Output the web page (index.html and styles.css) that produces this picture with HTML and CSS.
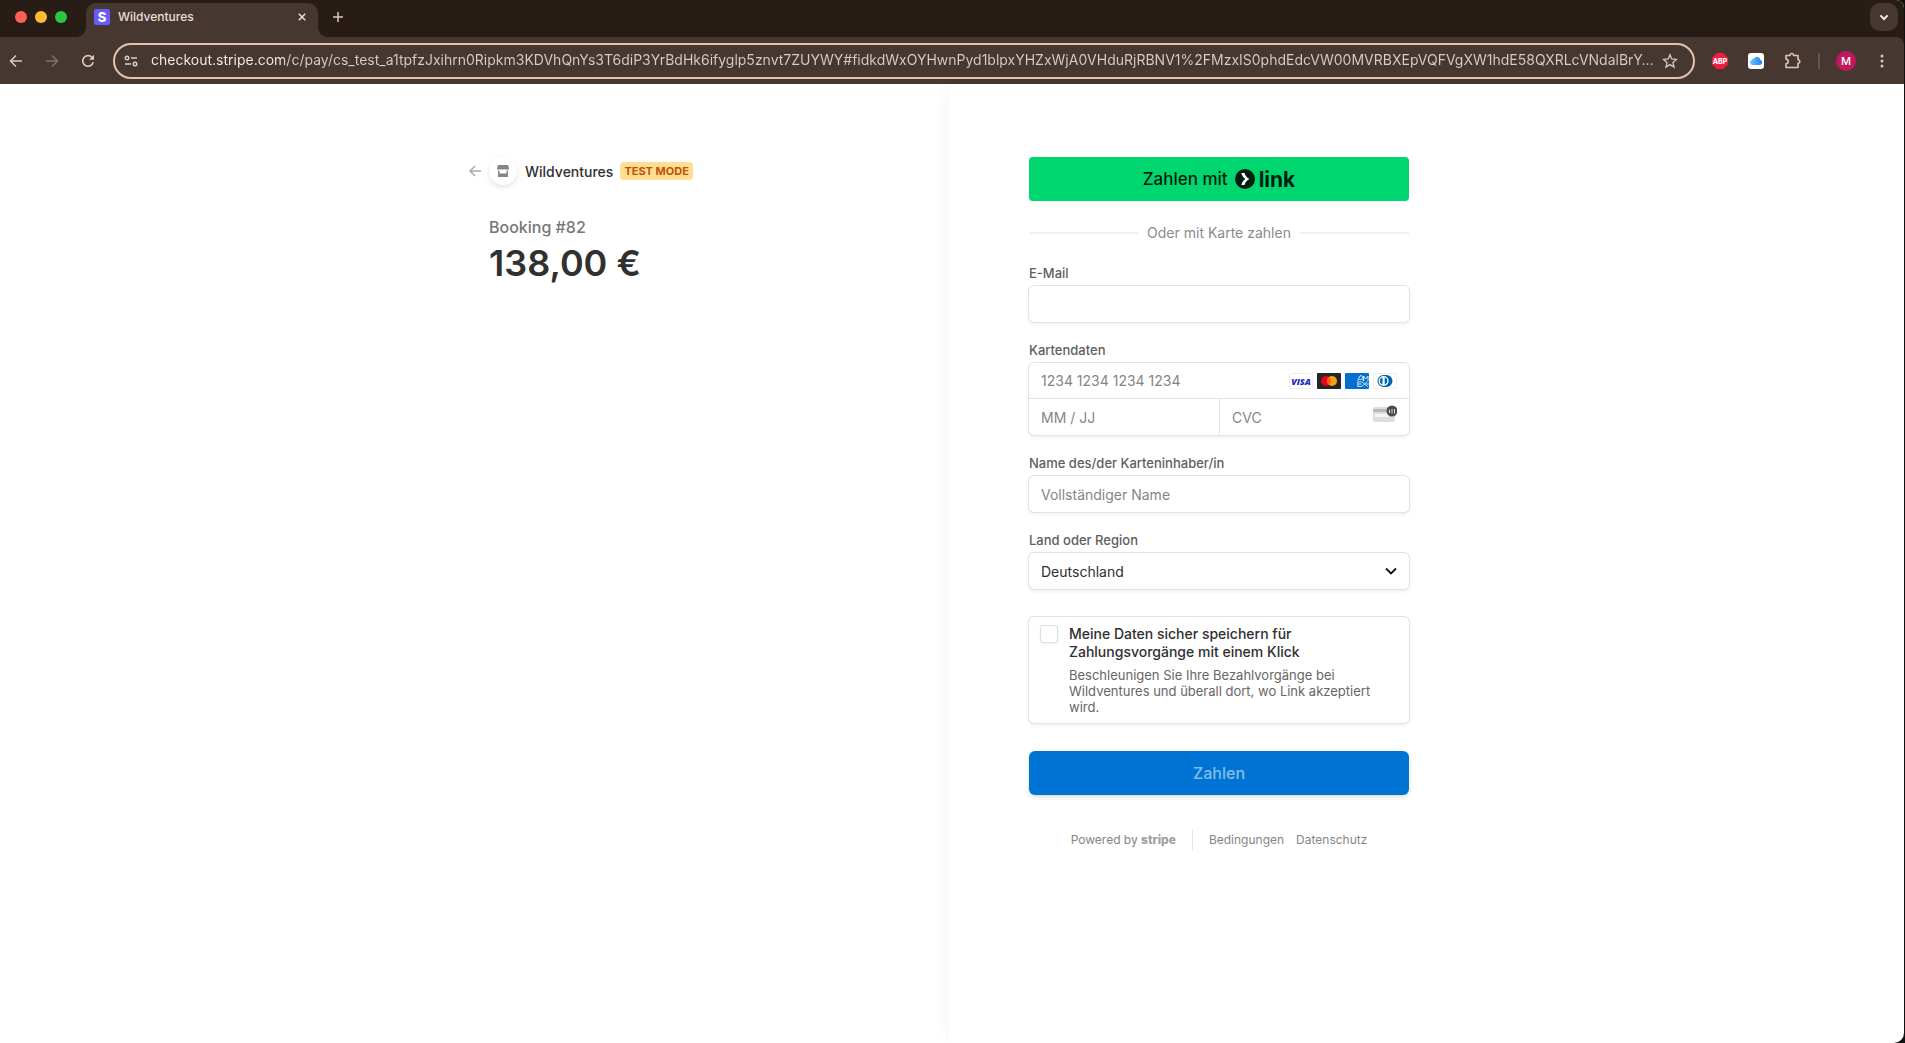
FILE: index.html
```html
<!DOCTYPE html>
<html lang="de">
<head>
<meta charset="utf-8">
<meta name="viewport" content="width=device-width, initial-scale=1">
<title>Wildventures</title>
<link rel="stylesheet" href="styles.css">
</head>
<body>
<div class="window">
  <header class="chrome">
    <div class="tabstrip">
      <div class="lights"><span class="light red"></span><span class="light amber"></span><span class="light green"></span></div>
      <div class="tab">
        <span class="favicon" aria-hidden="true">S</span>
        <span class="tab-title">Wildventures</span>
        <button class="icon-btn tab-close" aria-label="Tab schließen"><svg width="8" height="8" viewBox="0 0 8 8"><path d="M.8.8l6.4 6.4M7.2.8L.8 7.2" stroke="#eaded9" stroke-width="1.5" fill="none"/></svg></button>
      </div>
      <button class="icon-btn new-tab" aria-label="Neuer Tab"><svg width="12" height="12" viewBox="0 0 12 12"><path d="M6 1v10M1 6h10" stroke="#e0c4b6" stroke-width="1.5" fill="none"/></svg></button>
      <button class="icon-btn tab-search" aria-label="Tabs suchen"><svg width="10" height="7" viewBox="0 0 10 7"><path d="M1.4 1.4L5 5l3.600-3.600" stroke="#f2e9e5" stroke-width="2" fill="none"/></svg></button>
    </div>
    <div class="toolbar">
      <nav class="nav">
        <button class="icon-btn" aria-label="Zurück"><svg width="14" height="14" viewBox="0 0 14 14"><path d="M13 7H2M7 1.500L1.500 7 7 12.500" stroke="#dfc8bc" stroke-width="1.500" fill="none"/></svg></button>
        <button class="icon-btn" aria-label="Vorwärts"><svg width="14" height="14" viewBox="0 0 14 14"><path d="M1 7h11M7 1.500L12.500 7 7 12.500" stroke="#7d7069" stroke-width="1.500" fill="none"/></svg></button>
        <button class="icon-btn" aria-label="Neu laden"><svg width="14" height="14" viewBox="0 0 14 14"><path d="M12.200 8.300A5.300 5.300 0 1 1 11 3.400L12.300 4.700" stroke="#dfc8bc" stroke-width="1.600" fill="none"/><path d="M13 .8v4.900H8.100z" fill="#dfc8bc"/></svg></button>
      </nav>
      <div class="omnibox">
        <svg width="14" height="12" viewBox="0 0 14 12" fill="none" stroke="#dccfc8" stroke-width="1.400"><circle cx="3" cy="3" r="1.800"/><path d="M7 3h6M1 9h6"/><circle cx="11" cy="9" r="1.800"/></svg>
        <input class="url" type="text" aria-label="Adresse" value="checkout.stripe.com/c/pay/cs_test_a1tpfzJxihrn0Ripkm3KDVhQnYs3T6diP3YrBdHk6ifyglp5znvt7ZUYWY#fidkdWxOYHwnPyd1blpxYHZxWjA0VHduRjRBNV1%2FMzxIS0phdEdcVW00MVRBXEpVQFVgXW1hdE58QXRLcVNdalBrY…">
        <button class="icon-btn star" aria-label="Lesezeichen"><svg width="16" height="16" viewBox="0 0 16 16"><path d="M8 1.700l1.800 4.300 4.700.4-3.600 3.100 1.100 4.600L8 11.600l-4 2.500 1.100-4.600L1.500 6.400l4.700-.4z" stroke="#d8c8c0" stroke-width="1.300" fill="none"/></svg></button>
      </div>
      <div class="extensions">
        <button class="icon-btn" aria-label="Adblock Plus"><svg width="16" height="16" viewBox="0 0 16 16"><path d="M4.700 0h6.600L16 4.700v6.600L11.300 16H4.700L0 11.300V4.700z" fill="#f01d3c"/><text x="8" y="11" text-anchor="middle" class="abp">ABP</text></svg></button>
        <button class="icon-btn" aria-label="iCloud"><svg width="16" height="16" viewBox="0 0 16 16"><defs><linearGradient id="cloud"><stop stop-color="#64c8ff"/><stop offset="1" stop-color="#2680ef"/></linearGradient></defs><rect width="16" height="16" rx="3" fill="#fff"/><path d="M4.300 12a2.600 2.600 0 0 1-.4-5.100A2 2 0 0 1 6 5.400 3.600 3.600 0 0 1 12.500 7a2.600 2.600 0 0 1-.3 5z" fill="url(#cloud)"/></svg></button>
        <button class="icon-btn" aria-label="Erweiterungen"><svg width="18" height="18" viewBox="0 0 18 18"><path d="M3 3.500h4c-.2-2.600 3.800-2.600 3.600 0H15v4.200c2.300-.2 2.300 3.800 0 3.600v4.200H3v-3.700c3-.1 3-4.500 0-4.600z" stroke="#dfc4b6" stroke-width="1.600" fill="none" stroke-linejoin="round"/></svg></button>
        <span class="bar"></span>
        <button class="icon-btn avatar" aria-label="Profil">M</button>
        <button class="icon-btn" aria-label="Menü"><svg width="16" height="16" viewBox="0 0 16 16" fill="#dfc4b6"><circle cx="8" cy="3" r="1.500"/><circle cx="8" cy="8" r="1.500"/><circle cx="8" cy="13" r="1.500"/></svg></button>
      </div>
    </div>
  </header>

  <main class="checkout">
    <section class="pane summary">
      <div class="column">
        <div class="merchant">
          <a class="back" href="#" aria-label="Zurück"><svg width="12" height="12" viewBox="0 0 12 12"><path d="M12 6H1.500M6 1L1 6l5 5" stroke="#aaa" stroke-width="1.500" fill="none"/></svg></a>
          <span class="shop"><svg width="12" height="12" viewBox="0 0 12 12" fill="#858585"><path d="M1 0h10l1 3.200c0 1.800-1.900 1.800-2.400.9-.6 1-2 1-2.500 0-.6 1-1.900 1-2.400 0-.6 1-2 1-2.500 0C1.700 5 0 5 0 3.200z"/><path d="M1 5.500h1.500v3h7v-3H11V12H1z"/></svg></span>
          <span class="shop-name">Wildventures</span>
          <span class="badge">TEST MODE</span>
        </div>
        <p class="item">Booking #82</p>
        <p class="price">138,00 €</p>
      </div>
    </section>

    <section class="pane payment">
      <form class="column">
        <button type="button" class="link-pay">Zahlen mit
          <svg width="20" height="20" viewBox="0 0 20 20" aria-hidden="true"><circle cx="10" cy="10" r="10" fill="#011e0f"/><path d="M6.300 4h3.200c.7 2.800 2.600 4.800 5 6-2.400 1.200-4.300 3.200-5 6H6.300c.7-2.600 2-4.600 4-6-2-1.400-3.300-3.400-4-6z" fill="#fff"/></svg><span class="link-word">link</span></button>
        <div class="or">Oder mit Karte zahlen</div>

        <div class="field">
          <label for="email">E-Mail</label>
          <input class="box" id="email" type="email">
        </div>

        <div class="field">
          <label for="card">Kartendaten</label>
          <div class="card-group">
            <div class="card-row number">
              <input id="card" type="text" placeholder="1234 1234 1234 1234">
              <span class="brands" aria-hidden="true">
                <svg width="24" height="16" viewBox="0 0 24 16"><rect x=".5" y=".5" width="23" height="15" rx="1" fill="#fff" stroke="#eee"/><text x="12" y="12" text-anchor="middle" class="visa">VISA</text></svg>
                <svg width="24" height="16" viewBox="0 0 24 16"><rect width="24" height="16" rx="1" fill="#252525"/><circle cx="9" cy="8" r="5" fill="#eb001b"/><circle cx="15" cy="8" r="5" fill="#f79e1b"/><path d="M12 4a5 5 0 0 1 0 8 5 5 0 0 1 0-8" fill="#ff5f00"/></svg>
                <svg width="24" height="16" viewBox="0 0 24 16"><rect width="24" height="16" rx="1" fill="#016fd0"/><path d="M12.500 8l2.500-5.200h2L19 8M13.700 6.300h4M18.500 8V3l2.200 3L23 3v5M12.800 13.500V8.800h4M12.800 11h3.700M12.800 13.400h4l5.600-4.800M17 8.800l5.700 4.800M21 11h3" stroke="#fff" stroke-width=".8" fill="none"/></svg>
                <svg width="24" height="16" viewBox="0 0 24 16"><rect x=".5" y=".5" width="23" height="15" rx="1" fill="#fff" stroke="#eee"/><path d="M10.500 2h3a6 6 0 0 1 0 12h-3a6 6 0 0 1 0-12" fill="#0165ac"/><circle cx="10.600" cy="8" r="5" fill="#fff"/><path d="M9.500 4.300a3.900 3.900 0 0 0 0 7.400zM11.700 4.300a3.900 3.900 0 0 1 0 7.400z" fill="#0165ac"/></svg>
              </span>
            </div>
            <div class="card-row">
              <input type="text" placeholder="MM / JJ" aria-label="Ablaufdatum">
            </div>
            <div class="card-row cvc">
              <input type="text" placeholder="CVC" aria-label="CVC">
              <svg width="24" height="18" viewBox="0 0 24 18" aria-hidden="true"><rect y="2" width="22" height="15" rx="2" fill="#dedede"/><path d="M0 4h16v3H0z" fill="#b9b9b9"/><path d="M2 9h14v3H2z" fill="#f5f5f5"/><circle cx="19" cy="6" r="5.500" fill="#4a4a4a"/><path d="M16.500 4.500V8M19 4v4.500M21.500 4v4.500" stroke="#ddd" stroke-width="1"/></svg>
            </div>
          </div>
        </div>

        <div class="field">
          <label for="name">Name des/der Karteninhaber/in</label>
          <input class="box" id="name" type="text" placeholder="Vollständiger Name">
        </div>

        <div class="field">
          <label for="country">Land oder Region</label>
          <div class="select-wrap">
            <select class="box" id="country"><option>Deutschland</option></select>
            <svg class="chevron" width="12" height="8" viewBox="0 0 12 8" aria-hidden="true"><path d="M1 1.500l5 5 5-5" stroke="#111" stroke-width="1.800" fill="none"/></svg>
          </div>
        </div>

        <div class="remember">
          <input type="checkbox" id="save">
          <div>
            <label for="save">Meine Daten sicher speichern für Zahlungsvorgänge mit einem Klick</label>
            <p>Beschleunigen Sie Ihre Bezahlvorgänge bei Wildventures und überall dort, wo Link akzeptiert wird.</p>
          </div>
        </div>

        <button type="submit" class="submit">Zahlen</button>

        <footer class="legal">
          <a class="powered" href="#">Powered by <b>stripe</b></a>
          <a href="#">Bedingungen</a>
          <a href="#">Datenschutz</a>
        </footer>
      </form>
    </section>
  </main>
</div>
</body>
</html>
```
FILE: styles.css
```css
* { box-sizing: border-box; }
html { background: #101010; }
body {
  margin: 0;
  font-family: Inter, "Liberation Sans", sans-serif;
  font-size: 14px;
  color: #303030;
}
p { margin: 0; }
button, input, select { font: inherit; color: inherit; margin: 0; }
svg { display: block; flex: none; }
a { color: inherit; text-decoration: none; }

.window {
  display: flex;
  flex-direction: column;
  min-height: 100vh;
  margin-right: 1px;
  overflow: hidden;
  border-radius: 0 8px 10px 0;
  background: #fff;
}

/* Browser chrome */
.chrome { background: #281c17; }
.icon-btn {
  display: grid;
  place-items: center;
  width: 16px;
  height: 16px;
  padding: 0;
  border: 0;
  background: none;
}
.tabstrip {
  display: flex;
  align-items: center;
  height: 37px;
  padding: 3px 6px 0 15px;
}
.lights { display: flex; gap: 8px; width: 71px; padding-bottom: 6px; }
.light { width: 12px; height: 12px; border-radius: 50%; }
.red { background: #ff5f57; }
.amber { background: #febc2e; }
.green { background: #28c840; }
.tab {
  position: relative;
  display: flex;
  align-items: center;
  width: 232px;
  height: 34px;
  padding: 0 8px 6px;
  border-radius: 10px 10px 0 0;
  background: #463831;
}
.tab::before, .tab::after {
  content: "";
  position: absolute;
  bottom: 0;
  width: 10px;
  height: 10px;
}
.tab::before { left: -10px; background: radial-gradient(circle at 0 0, transparent 10px, #463831 10px); }
.tab::after { right: -10px; background: radial-gradient(circle at 100% 0, transparent 10px, #463831 10px); }
.favicon {
  display: grid;
  place-items: center;
  width: 16px;
  height: 16px;
  border-radius: 2px;
  background: #665bff;
  color: #fff;
  font-size: 13px;
  font-weight: 800;
}
.tab-title { flex: 1; padding-left: 8px; color: #eaded9; font-size: 12px; font-weight: 500; line-height: 16px; }
.new-tab { margin: 0 auto 6px 12px; }
.tab-search { width: 28px; height: 28px; margin-bottom: 6px; border-radius: 10px; background: #463831; }

.toolbar {
  display: flex;
  align-items: center;
  height: 47px;
  padding: 0 12px 0 8px;
  border-radius: 0 8px 0 0;
  background: #463831;
}
.nav { display: flex; gap: 20px; }
.omnibox {
  display: flex;
  align-items: center;
  flex: 1;
  height: 36px;
  margin: 0 15px 0 17px;
  padding: 0 15px 0 9px;
  border: 2px solid #e3c2b1;
  border-radius: 18px;
}
.url {
  flex: 1;
  min-width: 0;
  padding: 0 0 2px;
  margin: 0 6px 0 13px;
  border: 0;
  font-size: 14px;
  background: linear-gradient(90deg, #f8f0ec 133px, #d8cdc8 133px);
  background-clip: text;
  -webkit-background-clip: text;
  -webkit-text-fill-color: transparent;
}
.extensions { display: flex; align-items: center; gap: 16px; }
.extensions .icon-btn { width: 20px; height: 20px; }
.abp { font: 800 7px Inter, sans-serif; fill: #fff; }
.bar { width: 2px; height: 16px; background: #65554c; }
.extensions .avatar { border-radius: 50%; background: #c2185b; color: #fff; font-size: 11px; font-weight: 500; }

/* Checkout page */
.checkout {
  display: grid;
  grid-template-columns: 1fr 1fr;
  flex: 1;
  padding-right: 6px;
}
.pane { padding-top: 73px; }
.payment { box-shadow: -10px 0 14px -6px rgba(0, 0, 0, .04); padding-left: 80px; }
.column { width: 380px; }
.summary { display: flex; justify-content: flex-end; padding-right: 80px; }

.merchant { display: flex; align-items: center; height: 28px; margin-left: -20px; }
.back { width: 12px; margin-right: 8px; }
.shop {
  display: grid;
  place-items: center;
  width: 28px;
  height: 28px;
  border-radius: 50%;
  box-shadow: 0 2px 5px rgba(0, 0, 0, .12);
}
.shop-name { margin: 0 7px 0 8px; font-weight: 500; }
.badge {
  padding: 0 4px;
  border-radius: 4px;
  background: #ffde92;
  color: #bb5504;
  font-size: 11px;
  font-weight: 700;
  line-height: 18px;
}
.item { margin-top: 31px; color: #777; font-size: 16px; font-weight: 500; line-height: 22px; }
.price { font-size: 36px; font-weight: 600; line-height: 50px; }

.link-pay {
  display: flex;
  align-items: center;
  justify-content: center;
  gap: 7px;
  width: 100%;
  height: 44px;
  border: 0;
  border-radius: 4px;
  background: #00d66f;
  color: #011e0f;
  font-size: 17px;
  font-weight: 500;
}
.link-word { margin-left: -3px; font-size: 21px; font-weight: 700; }
.or {
  display: flex;
  align-items: center;
  gap: 9px;
  margin: 22px 0 21px;
  color: #8b8b8b;
  line-height: 20px;
}
.or::before, .or::after { content: ""; flex: 1; height: 2px; background: #f0f0f0; }

.field { margin-bottom: 19px; }
.field label { display: block; margin-bottom: 4px; color: #5e5e5e; font-size: 13px; font-weight: 500; line-height: 18px; }
.box, .card-group, .remember {
  width: 100%;
  border: 0;
  border-radius: 5px;
  background: #fff;
  box-shadow: 0 0 0 1px #e2e2e2, 0 2px 4px rgba(0, 0, 0, .08);
}
.box { display: block; height: 36px; padding: 0 12px; }
::placeholder { color: #858585; opacity: 1; }
.card-group { display: grid; grid-template-columns: repeat(2, minmax(0, 1fr)); }
.card-row { display: flex; align-items: center; height: 36px; padding-right: 12px; }
.card-row input { flex: 1; min-width: 0; height: 100%; padding: 0 12px; border: 0; background: none; }
.card-row.number { grid-column: 1 / -1; border-bottom: 1px solid #e4e4e4; }
.card-row.cvc { border-left: 1px solid #e4e4e4; }
.cvc svg { margin-bottom: 6px; }
.brands { display: flex; gap: 4px; }
.visa { font: italic 800 9px "Open Sans", sans-serif; fill: #1a2fc0; }
.select-wrap { position: relative; }
.select-wrap select { appearance: none; }
.chevron { position: absolute; right: 12px; top: 14px; pointer-events: none; }

.remember { display: flex; gap: 12px; margin-top: 28px; padding: 8px 32px 8px 12px; }
.remember input {
  appearance: none;
  flex: none;
  width: 16px;
  height: 16px;
  margin-top: 1px;
  border-radius: 2px;
  box-shadow: 0 0 0 1px #e0e0e0, 0 1px 3px rgba(0, 0, 0, .12);
}
.remember label { display: block; font-weight: 500; line-height: 18px; }
.remember p { margin-top: 6px; color: #666; font-size: 13px; line-height: 16px; }

.submit {
  width: 100%;
  height: 44px;
  margin-top: 28px;
  border: 0;
  border-radius: 6px;
  background: #0074d4;
  box-shadow: 0 2px 4px rgba(0, 0, 0, .14);
  color: #85bce9;
  font-size: 16px;
  font-weight: 500;
}
.legal { display: flex; justify-content: center; align-items: center; gap: 12px; margin: 34px 0; color: #858585; font-size: 12px; line-height: 22px; }
.powered { padding-right: 16px; margin-right: 4px; border-right: 1px solid #e4e4e4; }
.powered b { color: #a0a0a0; font-weight: 800; }
```
